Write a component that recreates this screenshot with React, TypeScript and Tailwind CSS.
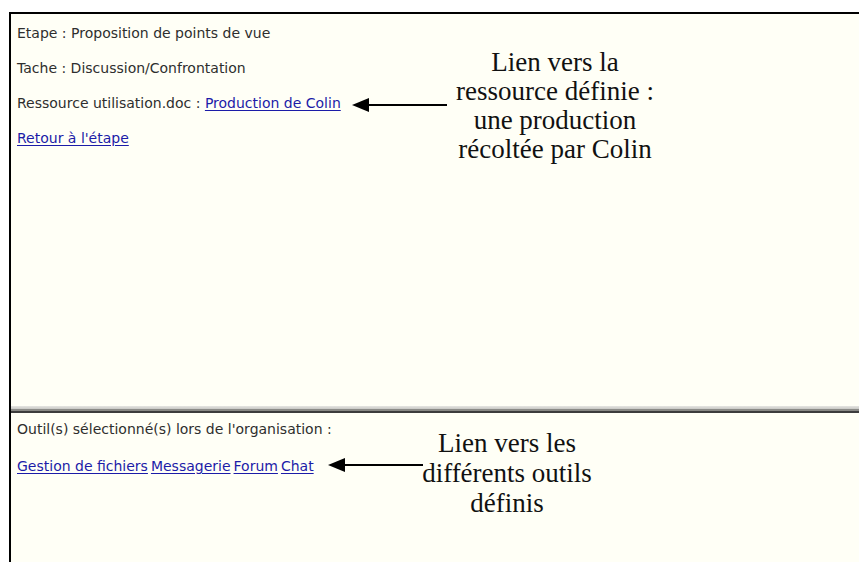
import React from "react";

const ui = "font-['DejaVu_Sans','Verdana',sans-serif] text-[14px] leading-[18px] text-[#2e2e2e]";
const link = "text-[#1c1ca8] underline underline-offset-2";
const note =
  "absolute font-['Liberation_Serif','Times_New_Roman',serif] text-[27px] text-[#111] text-center";

const Arrow: React.FC<{ width: number; className: string }> = ({ width, className }) => (
  <svg className={className} width={width} height={16} viewBox={`0 0 ${width} 16`}>
    <polygon points="0,8 17,1 17,15" fill="#000" />
    <rect x={16} y={7} width={width - 16} height={2} fill="#000" />
  </svg>
);

export default function App() {
  return (
    <div className="w-[859px] h-[562px] bg-white pt-[12px] pl-[9px] overflow-hidden">
      <div className="relative h-[550px] border-l-2 border-t-2 border-black bg-[#fffff6] flex flex-col">
        <div className={`${ui} h-[392px] pl-[6px] pt-[10px] flex flex-col gap-[17px]`}>
          <div>Etape : Proposition de points de vue</div>
          <div>Tache : Discussion/Confrontation</div>
          <div>
            Ressource utilisation.doc : <a className={link}>Production de Colin</a>
          </div>
          <div>
            <a className={link}>Retour à l'étape</a>
          </div>
        </div>
        <div className="h-[3px] bg-gradient-to-b from-[#e6e6e2] to-[#c8c8c4]" />
        <div className="h-[2px] bg-[#8a8a86]" />
        <div className="h-[2px] bg-[#3c3c3c]" />
        <div className={`${ui} flex-1 pl-[6px] pt-[7px] flex flex-col gap-[19px]`}>
          <div>Outil(s) sélectionné(s) lors de l'organisation :</div>
          <div className="flex gap-[3px]">
            <a className={link}>Gestion de fichiers</a>
            <a className={link}>Messagerie</a>
            <a className={link}>Forum</a>
            <a className={link}>Chat</a>
          </div>
        </div>

        <Arrow width={95} className="absolute left-[341px] top-[83px]" />
        <div className={`${note} leading-[29px] left-[424px] top-[34px] w-[240px]`}>
          Lien vers la
          <br />
          ressource définie :
          <br />
          une production
          <br />
          récoltée par Colin
        </div>

        <Arrow width={95} className="absolute left-[317px] top-[443px]" />
        <div className={`${note} leading-[30px] left-[396px] top-[414px] w-[200px]`}>
          Lien vers les
          <br />
          différents outils
          <br />
          définis
        </div>
      </div>
    </div>
  );
}
